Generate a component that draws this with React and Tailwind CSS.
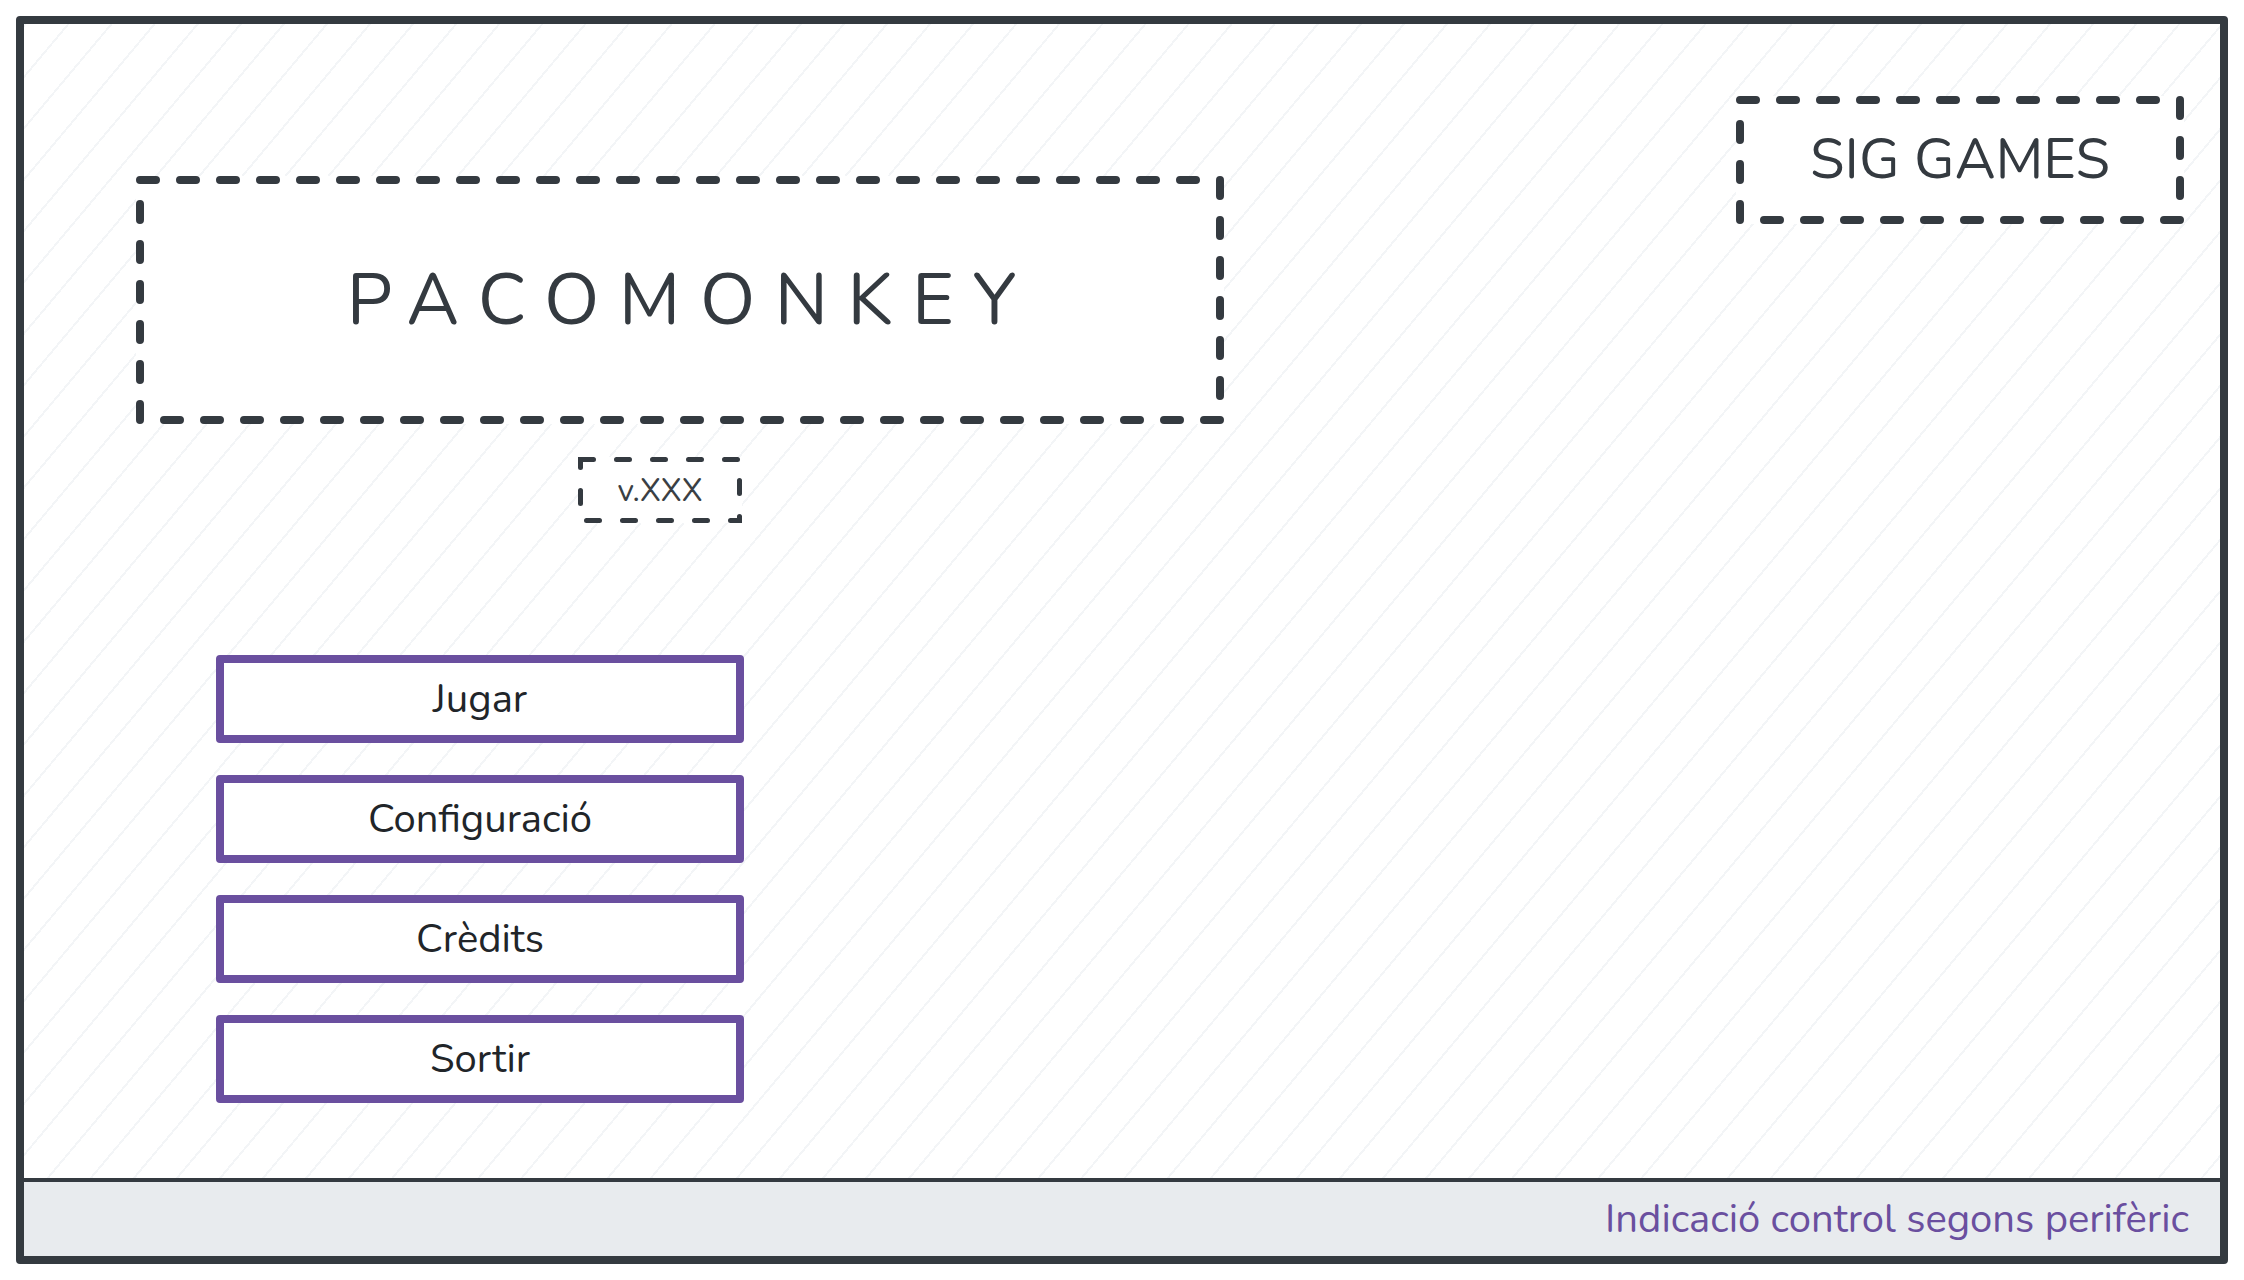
import React from 'react'

const ink = '#343a40'

// dashed outline, drawn side by side so every side starts on its corner
const DashedBox = ({ w, h, sw = 8, dash = 16, gap = 24, className, children }) => {
  const s = sw / 2
  const sides = [
    [s, s, w - s, s],
    [w - s, s, w - s, h - s],
    [w - s, h - s, s, h - s],
    [s, h - s, s, s],
  ]
  return (
    <div className={'relative bg-white flex items-center justify-center ' + className}>
      <svg className='absolute left-0 top-0 overflow-visible pointer-events-none' width={w} height={h}>
        {sides.map((l, i) => (
          <line
            key={i}
            x1={l[0]} y1={l[1]} x2={l[2]} y2={l[3]}
            stroke={ink}
            strokeWidth={sw}
            strokeLinecap='round'
            strokeDasharray={dash + ' ' + gap}
          />
        ))}
      </svg>
      {children}
    </div>
  )
}

const VersionBox = () => {
  const w = 164, h = 66, s = 2.5
  return (
    <div className='relative bg-white w-[164px] h-[66px] ml-[442px] mt-[33px] flex items-center justify-center'>
      <svg className='absolute left-0 top-0 overflow-visible' width={w} height={h}>
        <path
          d={`M${s} ${s} H${w - s} V${h - s} H${s} Z`}
          fill='none'
          stroke={ink}
          strokeWidth='5'
          strokeLinecap='round'
          strokeDasharray='13 23'
        />
      </svg>
      <span className='text-[32px] leading-none text-[#3a3f44] mt-[2px]'>v.XXX</span>
    </div>
  )
}

const MenuButton = ({ label }) => (
  <button className='w-[528px] h-[88px] bg-white border-8 border-[#6a4f9f] rounded-[4px] flex items-center justify-center text-[40px] leading-none text-[#212529] cursor-pointer'>
    {label}
  </button>
)

export default function App() {
  const buttons = ['Jugar', 'Configuració', 'Crèdits', 'Sortir']

  return (
    <div className='w-full h-[1280px] p-4 bg-white' style={{ fontFamily: 'Nunito, Lato, "Open Sans", sans-serif' }}>
      <div className='w-full h-full flex flex-col border-8 border-[#343a40] rounded-[4px] overflow-hidden'>
        <div className='flex-1 flex items-start justify-between pl-[112px] pr-[36px] bg-[image:repeating-linear-gradient(130deg,#f3f5f7_0px,#f3f5f7_2px,#ffffff_2px,#ffffff_33px)]'>
          <div className='flex flex-col pt-[152px]'>
            <DashedBox w={1088} h={248} className='w-[1088px] h-[248px]'>
              <span className='text-[72px] leading-none tracking-[19.5px] pl-[22px] text-[#343a40]'>PACOMONKEY</span>
            </DashedBox>

            <VersionBox />

            <div className='flex flex-col gap-8 ml-[80px] mt-[132px]'>
              {buttons.map((b) => (
                <MenuButton key={b} label={b} />
              ))}
            </div>
          </div>

          <DashedBox w={448} h={128} className='w-[448px] h-[128px] mt-[72px]'>
            <span className='text-[56px] leading-none text-[#343a40]'>SIG GAMES</span>
          </DashedBox>
        </div>

        <div className='h-[78px] border-t-4 border-[#343a40] bg-[#e8ebee] flex items-center justify-end pr-[31px]'>
          <span className='text-[40px] leading-none text-[#6a4f9f]'>Indicació control segons perifèric</span>
        </div>
      </div>
    </div>
  )
}
